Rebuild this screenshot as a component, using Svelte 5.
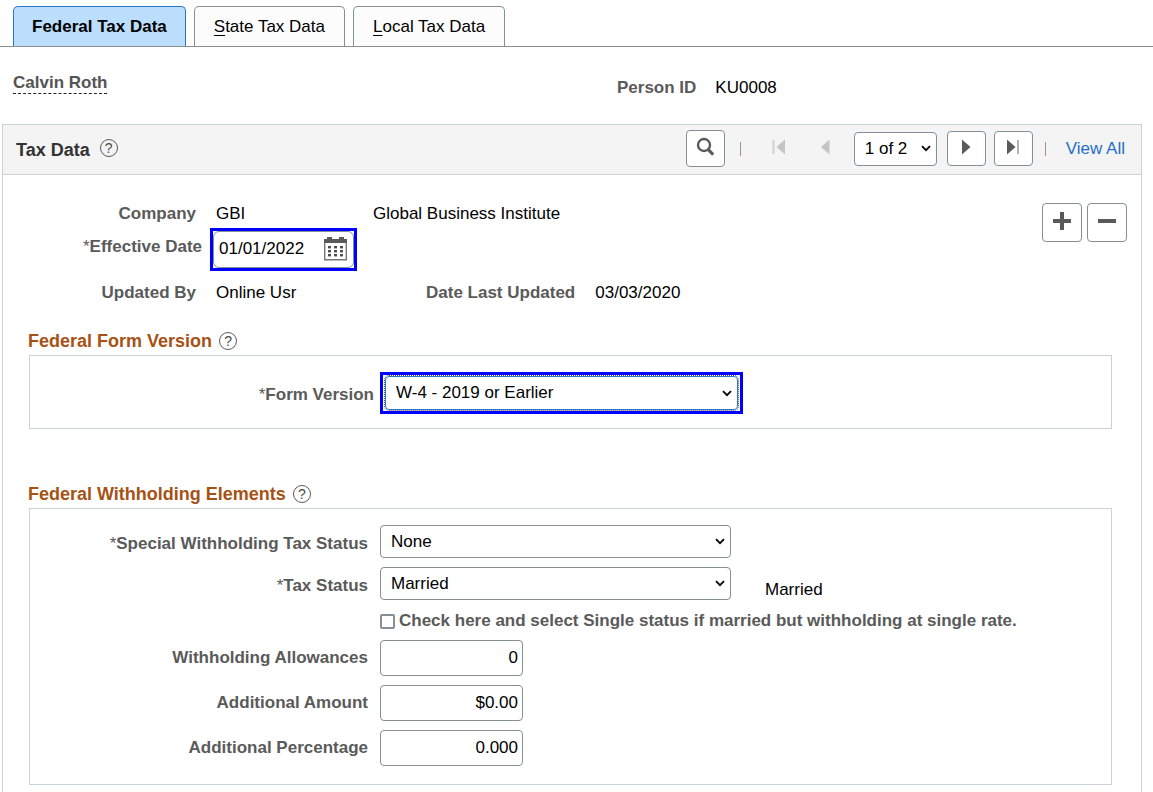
<script lang="ts">
  let activeTab = $state(0);
  let currentRow = $state('1 of 2');
  let effectiveDate = $state('01/01/2022');
  let formVersion = $state('W-4 - 2019 or Earlier');
  let specialStatus = $state('None');
  let taxStatus = $state('Married');
  let singleRate = $state(false);

  const tabs = [
    { key: '', label: 'Federal Tax Data' },
    { key: 'S', label: 'tate Tax Data' },
    { key: 'L', label: 'ocal Tax Data' }
  ];

  let amounts = $state([
    { id: 'allowances', label: 'Withholding Allowances', value: '0' },
    { id: 'amount', label: 'Additional Amount', value: '$0.00' },
    { id: 'percentage', label: 'Additional Percentage', value: '0.000' }
  ]);
</script>

<svelte:head>
  <title>Employee Tax Data</title>
</svelte:head>

<nav class="tabs">
  {#each tabs as tab, i}
    <button class="tab" class:active={activeTab === i} onclick={() => activeTab = i}>{#if tab.key}<u>{tab.key}</u>{/if}{tab.label}</button>
  {/each}
</nav>

<main>
  <div class="person">
    <div class="person-name"><span>Calvin Roth</span></div>
    <div class="person-id"><span class="label">Person ID</span><span>KU0008</span></div>
  </div>

  <section class="panel">
    <header class="panel-header">
      <h1>Tax Data</h1>
      <button class="help" aria-label="Tax Data help">?</button>

      <div class="toolbar">
        <button class="box-btn find" aria-label="Find">
          <svg width="19" height="20" viewBox="0 0 19 20">
            <circle cx="8" cy="8" r="6" fill="none" stroke="#5a5a5a" stroke-width="2.4" />
            <path d="M12.3 12.6 L17.2 17.6" stroke="#5a5a5a" stroke-width="3" />
          </svg>
        </button>
        <span class="sep"></span>
        <button class="plain-btn" aria-label="First row" disabled>
          <svg width="14" height="16" viewBox="0 0 14 16">
            <path d="M1.5 1 V15" stroke="#cfcfcf" stroke-width="2" />
            <path d="M13 0.5 V15.5 L4.5 8 Z" fill="#c4c4c4" />
          </svg>
        </button>
        <button class="plain-btn" aria-label="Previous row" disabled>
          <svg width="10" height="16" viewBox="0 0 10 16">
            <path d="M9.5 0.5 V15.5 L1 8 Z" fill="#c4c4c4" />
          </svg>
        </button>
        <select class="row-select" aria-label="Row" bind:value={currentRow}>
          <option>1 of 2</option>
          <option>2 of 2</option>
        </select>
        <button class="box-btn next" aria-label="Next row">
          <svg width="10" height="16" viewBox="0 0 10 16">
            <path d="M1 0.5 V15.5 L9.5 8 Z" fill="#5a5a5a" />
          </svg>
        </button>
        <button class="box-btn last" aria-label="Last row">
          <svg width="14" height="16" viewBox="0 0 14 16">
            <path d="M1 0.5 V15.5 L9.5 8 Z" fill="#5a5a5a" />
            <path d="M12 1 V15" stroke="#a0a0a0" stroke-width="1.6" />
          </svg>
        </button>
        <span class="sep narrow"></span>
        <a class="view-all" href="#all">View All</a>
      </div>
    </header>

    <div class="summary">
      <div class="details">
        <div class="detail-row">
          <span class="label lead">Company</span>
          <span class="code">GBI</span>
          <span>Global Business Institute</span>
        </div>

        <div class="date-row">
          <label class="label lead-date" for="effdt"><i>*</i>Effective Date</label>
          <div class="highlight">
            <div class="date-box">
              <input id="effdt" type="text" bind:value={effectiveDate} />
              <button class="calendar" aria-label="Choose a date">
                <svg width="23" height="24" viewBox="0 0 23 24">
                  <path d="M0 2 H3 V0 H8 V2 H15 V0 H20 V2 H23 V6 H0 Z" fill="#5a5a5a" />
                  <path d="M0.7 6 V22.7 H22.3 V6" fill="none" stroke="#777" stroke-width="1.4" />
                  {#each [9, 13, 17] as y}
                    {#each [4, 10, 16] as x}
                      <rect {x} {y} width="3" height="2.4" fill="#4c4c4c" />
                    {/each}
                  {/each}
                </svg>
              </button>
            </div>
          </div>
        </div>

        <div class="detail-row updated">
          <span class="label lead">Updated By</span>
          <span class="user">Online Usr</span>
          <span class="label">Date Last Updated</span>
          <span>03/03/2020</span>
        </div>
      </div>

      <div class="row-actions">
        <button class="box-btn add" aria-label="Add a row">
          <svg width="18" height="18" viewBox="0 0 18 18">
            <path d="M9 0 V18 M0 9 H18" stroke="#5a5a5a" stroke-width="4" />
          </svg>
        </button>
        <button class="box-btn add" aria-label="Delete this row">
          <svg width="18" height="18" viewBox="0 0 18 18">
            <path d="M0 9 H18" stroke="#5a5a5a" stroke-width="4" />
          </svg>
        </button>
      </div>
    </div>

    <div class="group-title">
      <h2>Federal Form Version</h2>
      <button class="help" aria-label="Federal Form Version help">?</button>
    </div>
    <div class="group">
      <div class="field">
        <label class="label close" for="version"><i>*</i>Form Version</label>
        <div class="highlight version">
          <select id="version" class="focused" bind:value={formVersion}>
            <option>W-4 - 2019 or Earlier</option>
            <option>W-4 - 2020 or Later</option>
          </select>
        </div>
      </div>
    </div>

    <div class="group-title second">
      <h2>Federal Withholding Elements</h2>
      <button class="help" aria-label="Federal Withholding Elements help">?</button>
    </div>
    <div class="group elements">
      <div class="field">
        <label class="label for-select" for="special"><i>*</i>Special Withholding Tax Status</label>
        <select id="special" class="wide" bind:value={specialStatus}>
          <option>None</option>
          <option>Exempt</option>
        </select>
      </div>
      <div class="field">
        <label class="label for-select" for="status"><i>*</i>Tax Status</label>
        <div class="status">
          <select id="status" class="wide" bind:value={taxStatus}>
            <option>Married</option>
            <option>Single</option>
          </select>
          <span class="status-text">{taxStatus}</span>
        </div>
      </div>
      <div class="field">
        <span></span>
        <label class="check">
          <input type="checkbox" bind:checked={singleRate} />
          Check here and select Single status if married but withholding at single rate.
        </label>
      </div>
      {#each amounts as item}
        <div class="field">
          <label class="label" for={item.id}>{item.label}</label>
          <input id={item.id} class="number" type="text" bind:value={item.value} />
        </div>
      {/each}
    </div>
  </section>
</main>

<style>
  :global(body) {
    margin: 0;
    background: #fff;
    color: #000;
    font-family: "Liberation Sans", Arial, sans-serif;
    font-size: 17px;
    line-height: 20px;
  }

  * {
    box-sizing: border-box;
  }

  button,
  input,
  select {
    margin: 0;
    font: inherit;
    color: #000;
  }

  svg {
    display: block;
  }

  i {
    font-style: normal;
    font-weight: 400;
  }

  .tabs {
    display: flex;
    gap: 8px;
    padding: 6px 13px 0;
    border-bottom: 1px solid #868e96;
  }

  .tab {
    height: 40px;
    padding: 0 19px;
    border: 1px solid #868e96;
    border-bottom: 0;
    border-radius: 5px 5px 0 0;
    background: #fcfcfc;
  }

  .tab.active {
    padding: 0 18px;
    border-color: #2c77c9;
    background: #badefc;
    font-weight: 700;
  }

  .tab u {
    text-underline-offset: 3px;
  }

  .person {
    display: grid;
    grid-template-columns: 604px 1fr;
    height: 77px;
    padding: 25px 13px 0;
  }

  .person-name span {
    display: inline-block;
    border-bottom: 1px dashed #222;
    color: #545454;
    font-weight: 700;
    line-height: 21px;
  }

  .person-id {
    display: flex;
    gap: 19px;
    padding-top: 6px;
  }

  .label {
    color: #5a5a5a;
    font-weight: 700;
  }

  .panel {
    margin: 0 11px 0 2px;
    padding-bottom: 7px;
    border: 1px solid #ccd1d8;
    border-bottom: 0;
  }

  .panel-header {
    display: flex;
    align-items: center;
    height: 50px;
    padding: 0 16px 0 13px;
    border-bottom: 1px solid #ccd1d8;
    background: #f4f4f4;
  }

  h1,
  h2 {
    margin: 0;
    font-size: 18px;
    line-height: 20px;
  }

  h1 {
    color: #333;
  }

  h2 {
    color: #a75215;
  }

  .help {
    width: 18px;
    height: 18px;
    padding: 0;
    border: 1px solid #5a5a5a;
    border-radius: 50%;
    background: none;
    color: #4c4c4c;
    font-size: 14px;
    line-height: 16px;
  }

  .panel-header .help {
    margin: 0 0 4px 10px;
  }

  .toolbar {
    display: flex;
    align-items: center;
    margin-left: auto;
    padding-bottom: 2px;
  }

  .box-btn {
    display: flex;
    align-items: center;
    justify-content: center;
    width: 39px;
    height: 35px;
    padding: 0 0 3px;
    border: 1px solid #868e96;
    border-radius: 4px;
    background: #fff;
  }

  .box-btn.find {
    height: 37px;
  }

  .box-btn.add {
    width: 40px;
    height: 39px;
  }

  .next {
    margin-left: 10px;
  }

  .last {
    margin-left: 8px;
  }

  .sep {
    width: 1px;
    height: 14px;
    margin: 0 15px;
    background: #a68f95;
  }

  .sep.narrow {
    margin: 0 12px;
  }

  .plain-btn {
    display: flex;
    justify-content: center;
    width: 46px;
    padding: 0 0 3px;
    border: 0;
    background: none;
  }

  .view-all {
    padding-left: 8px;
    color: #1f6fc8;
    text-decoration: none;
  }

  select {
    height: 34px;
    padding: 0 30px 0 10px;
    border: 1px solid #868e96;
    border-radius: 4px;
    appearance: none;
    background: #fff url("data:image/svg+xml,%3Csvg xmlns='http://www.w3.org/2000/svg' width='10' height='7'%3E%3Cpath d='M1 1.2 L5 5.2 L9 1.2' fill='none' stroke='black' stroke-width='1.8'/%3E%3C/svg%3E") no-repeat right 5px center;
  }

  .row-select {
    width: 83px;
    margin-left: 6px;
    padding-right: 20px;
  }

  .summary {
    display: flex;
    justify-content: space-between;
    padding: 28px 14px 0 0;
  }

  .detail-row {
    display: flex;
    gap: 20px;
    padding-top: 1px;
  }

  .lead {
    width: 193px;
    text-align: right;
  }

  .code {
    width: 137px;
  }

  .user {
    width: 190px;
  }

  .date-row {
    display: flex;
    gap: 8px;
    margin-top: 4px;
  }

  .lead-date {
    width: 199px;
    padding-top: 9px;
    text-align: right;
  }

  .highlight {
    border: 3px solid #0000ff;
  }

  .date-box {
    display: flex;
    align-items: center;
    width: 141px;
    height: 37px;
    padding: 0 6px 2px 5px;
    border: 1px solid #868e96;
    border-radius: 6px;
  }

  .date-box input {
    flex: 1;
    min-width: 0;
    padding: 0;
    border: 0;
    outline: 0;
    background: none;
  }

  .calendar {
    padding: 0;
    border: 0;
    background: none;
  }

  .updated {
    margin-top: 11px;
  }

  .row-actions {
    display: flex;
    gap: 5px;
  }

  .group-title {
    display: flex;
    align-items: center;
    gap: 7px;
    margin: 28px 25px 4px;
  }

  .group-title.second {
    margin-top: 55px;
  }

  .group {
    display: flex;
    flex-direction: column;
    gap: 9px;
    margin: 0 29px 0 26px;
    padding: 16px 0 14px;
    border: 1px solid #ccd1d8;
  }

  .group.elements {
    padding-bottom: 18px;
  }

  .field {
    display: grid;
    grid-template-columns: 350px 1fr;
    align-items: center;
  }

  .field .label {
    padding-right: 12px;
    text-align: right;
  }

  .field .label.for-select {
    padding-top: 4px;
  }

  .field .label.close {
    padding-top: 4px;
    padding-right: 6px;
  }

  .highlight.version {
    width: 363px;
    padding: 1px 2px;
  }

  .focused {
    display: block;
    width: 100%;
    border-color: #2c77c9;
    outline: 1px dotted #555;
  }

  .wide {
    width: 351px;
    height: 33px;
  }

  .status {
    display: flex;
    align-items: flex-end;
    gap: 34px;
  }

  .check {
    display: flex;
    align-items: center;
    gap: 4px;
    padding-top: 2px;
    color: #5a5a5a;
    font-weight: 700;
  }

  .check input {
    width: 15px;
    height: 15px;
    border: 2px solid #868e96;
    border-radius: 2px;
    appearance: none;
    background: #fff;
  }

  .check input:checked {
    background: #2c77c9;
  }

  .number {
    width: 143px;
    height: 36px;
    padding: 0 4px;
    border: 1px solid #868e96;
    border-radius: 4px;
    text-align: right;
  }
</style>
